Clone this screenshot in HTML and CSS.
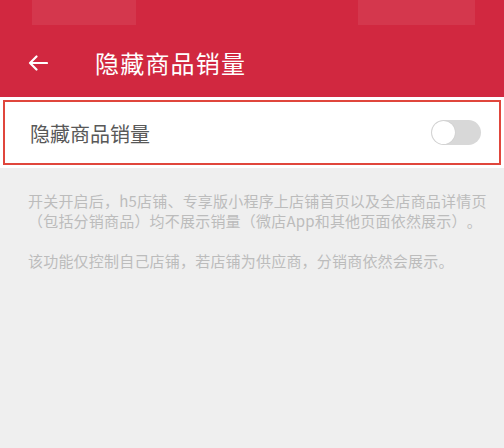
FILE: index.html
```html
<!DOCTYPE html>
<html lang="zh-CN">
<head>
    <meta charset="UTF-8">
    <meta name="viewport" content="width=device-width, initial-scale=1.0">
    <title>隐藏商品销量</title>
    <link rel="stylesheet" href="styles.css">
</head>
<body>
    <header class="app-header">
        <div class="status-bar">
            <span class="status-blur status-left"></span>
            <span class="status-blur status-right"></span>
        </div>
        <div class="toolbar">
            <svg class="back-icon" viewBox="0 0 20 16" width="20" height="16">
                <path d="M19 8H2M8.5 1.5L2 8l6.5 6.5" fill="none" stroke="#fff" stroke-width="2.2" stroke-linecap="round" stroke-linejoin="round"/>
            </svg>
            <h1 class="title">隐藏商品销量</h1>
        </div>
    </header>

    <div class="setting-wrap">
        <div class="setting-row">
            <span class="setting-label">隐藏商品销量</span>
            <span class="switch"><span class="knob"></span></span>
        </div>
    </div>

    <div class="notes">
        <p>开关开启后，h5店铺、专享版小程序上店铺首页以及全店商品详情页（包括分销商品）均不展示销量（微店App和其他页面依然展示）。</p>
        <p>该功能仅控制自己店铺，若店铺为供应商，分销商依然会展示。</p>
    </div>
</body>
</html>
```

FILE: styles.css
```css
body {
    margin: 0;
    background: #efefef;
    font-family: "Noto Sans CJK SC", "Noto Sans", sans-serif;
    width: 504px;
    height: 448px;
    overflow: hidden;
}
.app-header {
    background: #d12840;
    height: 97px;
}
.status-bar {
    height: 30px;
    position: relative;
}
.status-blur {
    position: absolute;
    top: 0;
    height: 25px;
    background: rgba(255, 255, 255, 0.07);
}
.status-left {
    left: 32px;
    width: 104px;
}
.status-right {
    left: 358px;
    width: 117px;
}
.toolbar {
    height: 67px;
    display: flex;
    align-items: center;
    padding-left: 28px;
}
.back-icon {
    display: block;
    margin-top: -2px;
}
.title {
    margin: 0 0 0 47px;
    color: #fff;
    font-size: 24px;
    font-weight: normal;
    letter-spacing: 1.2px;
    margin-top: -3px;
}
.setting-wrap {
    background: #fff;
    padding: 3px;
}
.setting-row {
    height: 61px;
    border: 2px solid #e0463c;
    display: flex;
    align-items: center;
    justify-content: space-between;
    padding: 0 18px 0 25px;
}
.setting-label {
    color: #585858;
    font-size: 20px;
    margin-top: 2px;
}
.switch {
    width: 50px;
    height: 25px;
    border-radius: 13px;
    background: #d8d8d8;
    position: relative;
}
.knob {
    position: absolute;
    left: 1px;
    top: 1px;
    width: 23px;
    height: 23px;
    border-radius: 50%;
    background: #fff;
    box-shadow: 0 0 1px rgba(0, 0, 0, 0.2);
}
.notes {
    padding: 23px 10px 0 28px;
    color: #bcbcbc;
    font-size: 15px;
    line-height: 20px;
    letter-spacing: 0.2px;
    text-spacing-trim: space-all;
}
.notes p {
    margin: 0 0 20px;
}
```
